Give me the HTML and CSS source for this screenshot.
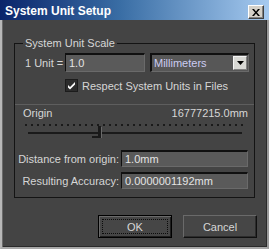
FILE: index.html
```html
<!DOCTYPE html>
<html>
<head>
<meta charset="utf-8">
<link rel="stylesheet" href="styles.css">
</head>
<body>
<div class="window">
  <div class="titlebar">
    <span class="title">System Unit Setup</span>
    <span class="close"><svg width="8" height="7" viewBox="0 0 8 7"><path d="M0 0h2l2 2.5L6 0h2L5 3.5 8 7H6L4 4.5 2 7H0l3-3.5z" fill="#000"/></svg></span>
  </div>
  <div class="body">
    <fieldset class="group">
      <legend class="legend">System Unit Scale</legend>
      <div class="unit-row">
        <span class="unit-label">1 Unit =</span>
        <div class="input unit-input">1.0</div>
        <div class="select"><span class="select-text">Millimeters</span><span class="select-btn"><svg width="7" height="4" viewBox="0 0 7 4"><path d="M0 0h7L3.5 4z" fill="#000"/></svg></span></div>
      </div>
      <div class="check-row">
        <span class="checkbox"><svg width="9" height="9" viewBox="0 0 9 9"><path d="M1 4l2 2 5-5v2.5l-5 5-2-2z" fill="#fff"/></svg></span>
        <span class="check-label">Respect System Units in Files</span>
      </div>
      <div class="section">
        <div class="origin-row"><span>Origin</span><span>16777215.0mm</span></div>
        <div class="slider">
          <svg width="220" height="20" viewBox="0 0 220 20">
            <g fill="#1a1a1a">
              <rect x="0" y="4" width="2" height="2"/><rect x="6" y="4" width="2" height="2"/><rect x="12" y="4" width="2" height="2"/><rect x="18" y="4" width="2" height="2"/><rect x="24" y="4" width="2" height="2"/><rect x="30" y="4" width="2" height="2"/><rect x="36" y="4" width="2" height="2"/><rect x="42" y="4" width="2" height="2"/><rect x="48" y="4" width="2" height="2"/><rect x="54" y="4" width="2" height="2"/><rect x="60" y="4" width="2" height="2"/><rect x="66" y="4" width="2" height="2"/><rect x="72" y="4" width="2" height="2"/><rect x="78" y="4" width="2" height="2"/><rect x="84" y="4" width="2" height="2"/><rect x="90" y="4" width="2" height="2"/><rect x="96" y="4" width="2" height="2"/><rect x="102" y="4" width="2" height="2"/><rect x="108" y="4" width="2" height="2"/><rect x="114" y="4" width="2" height="2"/><rect x="120" y="4" width="2" height="2"/><rect x="126" y="4" width="2" height="2"/><rect x="132" y="4" width="2" height="2"/><rect x="138" y="4" width="2" height="2"/><rect x="144" y="4" width="2" height="2"/><rect x="150" y="4" width="2" height="2"/><rect x="156" y="4" width="2" height="2"/><rect x="162" y="4" width="2" height="2"/><rect x="168" y="4" width="2" height="2"/><rect x="174" y="4" width="2" height="2"/><rect x="180" y="4" width="2" height="2"/><rect x="186" y="4" width="2" height="2"/><rect x="192" y="4" width="2" height="2"/><rect x="198" y="4" width="2" height="2"/><rect x="204" y="4" width="2" height="2"/><rect x="210" y="4" width="2" height="2"/><rect x="216" y="4" width="2" height="2"/>
              <rect x="3" y="12" width="214" height="2"/>
              <rect x="73" y="6" width="3" height="12"/>
              <rect x="67" y="16" width="9" height="2"/>
            </g>
            <rect x="76" y="7" width="1" height="11" fill="#6a6a6a"/>
          </svg>
        </div>
        <div class="field-row"><span class="field-label">Distance from origin:</span><div class="input field-input">1.0mm</div></div>
        <div class="field-row"><span class="field-label">Resulting Accuracy:</span><div class="input field-input">0.0000001192mm</div></div>
      </div>
    </fieldset>
    <div class="buttons">
      <button class="btn btn-default"><span class="focus">OK</span></button>
      <button class="btn">Cancel</button>
    </div>
  </div>
</div>
</body>
</html>
```
FILE: styles.css
```css
html, body {
  margin: 0;
  padding: 0;
  background: #444444;
}
.window {
  width: 269px;
  height: 249px;
  display: flex;
  flex-direction: column;
  font-family: "Liberation Sans", Arial, sans-serif;
  font-size: 11px;
  color: #d6d6d6;
  overflow: hidden;
}
.titlebar {
  height: 20px;
  box-sizing: border-box;
  padding: 3px 0 0 5px;
  line-height: 17px;
  background: linear-gradient(to right, #0a246a 0%, #3a6ea5 45%, #a6caf0 100%);
  display: flex;
  align-items: flex-start;
  justify-content: space-between;
  flex-shrink: 0;
}
.title {
  font-weight: bold;
  font-size: 12px;
  color: #ffffff;
}
.close {
  width: 16px;
  height: 14px;
  box-sizing: border-box;
  margin: 2px 5px 0 0;
  background: #d4d0c8;
  border-top: 1px solid #ffffff;
  border-left: 1px solid #ffffff;
  border-right: 1px solid #404040;
  border-bottom: 1px solid #404040;
  box-shadow: inset -1px -1px 0 #808080;
  display: flex;
  align-items: center;
  justify-content: center;
}
.body {
  flex: 1;
  background: #444444;
  border-left: 2px solid #b8b8b8;
  border-right: 2px solid #9a9a9a;
  border-bottom: 2px solid #a8a8a8;
  box-shadow: inset 1px 0 0 #6a6a6a, inset -1px -1px 0 #2a2a2a;
  display: flex;
  flex-direction: column;
}
.group {
  margin: 17px 0 0 12px;
  width: 241px;
  box-sizing: border-box;
  padding: 0 0 8px 0;
  border: 1px solid #141414;
  min-width: 0;
}
.legend {
  margin-left: 8px;
  padding: 0 2px;
  line-height: 13px;
  color: #d6d6d6;
}
.unit-row {
  display: flex;
  align-items: center;
  margin-top: 3px;
  height: 19px;
}
.unit-label {
  width: 40px;
  padding-left: 10px;
}
.input {
  box-sizing: border-box;
  background: #5a5a5a;
  border-top: 2px solid #101010;
  border-left: 1px solid #101010;
  border-right: 1px solid #6a6a6a;
  border-bottom: 1px solid #6a6a6a;
  color: #e4e4e4;
  padding-left: 3px;
  display: flex;
  align-items: center;
}
.unit-input {
  width: 80px;
  height: 19px;
}
.select {
  margin-left: 5px;
  width: 99px;
  height: 19px;
  box-sizing: border-box;
  background: #575757;
  border-top: 2px solid #101010;
  border-left: 2px solid #101010;
  border-right: 1px solid #6a6a6a;
  border-bottom: 1px solid #6a6a6a;
  display: flex;
  align-items: center;
  justify-content: space-between;
  padding: 0 1px 0 2px;
}
.select-text {
  color: #ccccf2;
}
.select-btn {
  width: 14px;
  height: 14px;
  box-sizing: border-box;
  background: #d8d8d4;
  border-top: 1px solid #f4f4f4;
  border-left: 1px solid #f4f4f4;
  border-right: 1px solid #808080;
  border-bottom: 1px solid #808080;
  display: flex;
  align-items: center;
  justify-content: center;
}
.check-row {
  display: flex;
  align-items: center;
  margin-top: 7px;
  padding-left: 50px;
  height: 13px;
}
.checkbox {
  width: 13px;
  height: 13px;
  box-sizing: border-box;
  background: #2c2c2c;
  border: 1px solid #1c1c1c;
  display: flex;
  align-items: center;
  justify-content: center;
}
.check-label {
  margin-left: 4px;
}
.section {
  margin-top: 12px;
  border-top: 1px solid #5e5e5e;
}
.origin-row {
  display: flex;
  justify-content: space-between;
  margin-top: 2px;
  line-height: 13px;
  padding: 0 6px 0 8px;
}
.slider {
  height: 20px;
  padding-left: 10px;
}
.slider svg {
  display: block;
}
.field-row {
  display: flex;
  align-items: center;
  height: 17px;
  margin-top: 10px;
}
.field-row + .field-row {
  margin-top: 5px;
}
.field-label {
  width: 104px;
  text-align: right;
}
.field-input {
  margin-left: 2px;
  width: 127px;
  height: 17px;
}
.buttons {
  display: flex;
  margin: 17px 0 0 96px;
  gap: 11px;
}
.btn {
  width: 74px;
  height: 23px;
  box-sizing: border-box;
  font-family: "Liberation Sans", Arial, sans-serif;
  font-size: 11px;
  color: #d6d6d6;
  background: #464646;
  border-top: 1px solid #6a6a6a;
  border-left: 1px solid #6a6a6a;
  border-right: 1px solid #101010;
  border-bottom: 1px solid #101010;
  box-shadow: inset -1px -1px 0 #2c2c2c;
  padding: 0;
  display: flex;
  align-items: center;
  justify-content: center;
}
.btn-default {
  border: 1px solid #000000;
  box-shadow: inset 1px 1px 0 #6a6a6a, inset -1px -1px 0 #1e1e1e;
  padding: 3px;
}
.focus {
  flex: 1;
  align-self: stretch;
  border: 1px dotted #0c0c0c;
  display: flex;
  align-items: center;
  justify-content: center;
}
```
